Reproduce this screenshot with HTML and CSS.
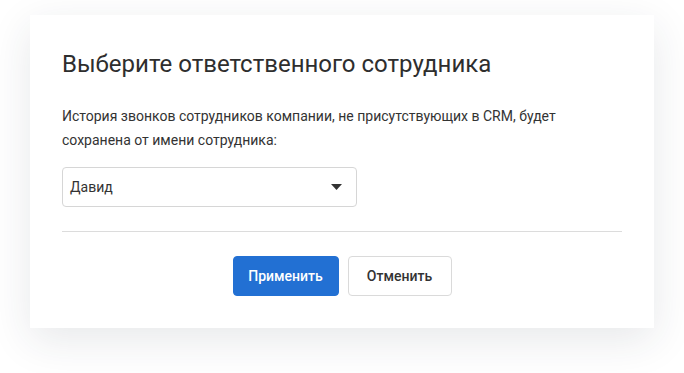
FILE: index.html
```html
<!DOCTYPE html>
<html lang="ru">
<head>
<meta charset="utf-8">
<link rel="stylesheet" href="styles.css">
</head>
<body>
<div class="card">
  <h1 class="title">Выберите ответственного сотрудника</h1>
  <p class="desc">История звонков сотрудников компании, не присутствующих в CRM, будет сохранена от имени сотрудника:</p>
  <div class="select">
    <span class="select-value">Давид</span>
    <svg class="caret" width="11" height="6" viewBox="0 0 11 6"><path d="M0 0H11L5.5 6Z" fill="#333"/></svg>
  </div>
  <hr class="divider">
  <div class="actions">
    <button class="btn btn-primary">Применить</button>
    <button class="btn btn-secondary">Отменить</button>
  </div>
</div>
</body>
</html>
```

FILE: styles.css
```css
* { box-sizing: border-box; }
html, body { margin: 0; background: #fff; }
html { min-height: 100%; }
body {
  min-height: 100vh;
  padding: 15px 30px;
  font-family: Roboto, "Noto Sans", sans-serif;
  color: #333;
}
.card {
  width: 624px;
  background: #fff;
  padding: 35px 32px 32px;
  box-shadow: 0 12px 40px rgba(40, 50, 60, 0.11);
}
.title {
  margin: 0;
  font-size: 24px;
  line-height: 28px;
  font-weight: 400;
  color: #2e2e2e;
}
.desc {
  margin: 26px 0 0;
  font-size: 14px;
  line-height: 24px;
  color: #333;
  width: 520px;
}
.select {
  margin-top: 15px;
  width: 295px;
  height: 40px;
  border: 1px solid #d6d6d6;
  border-radius: 4px;
  display: flex;
  align-items: center;
  justify-content: space-between;
  padding: 0 14px 0 7px;
  font-size: 14px;
}
.divider {
  margin: 24px 0 0;
  border: 0;
  border-top: 1px solid #dcdcdc;
}
.actions {
  display: flex;
  justify-content: center;
  gap: 9px;
  margin-top: 24px;
}
.btn {
  height: 40px;
  border-radius: 4px;
  font-family: Roboto, "Noto Sans", sans-serif;
  font-size: 14px;
  font-weight: 500;
  padding: 0;
}
.btn-primary {
  width: 106px;
  background: #2270d3;
  border: 1px solid #2270d3;
  color: #fff;
}
.btn-secondary {
  width: 104px;
  background: #fff;
  border: 1px solid #dadada;
  color: #333;
}
```
